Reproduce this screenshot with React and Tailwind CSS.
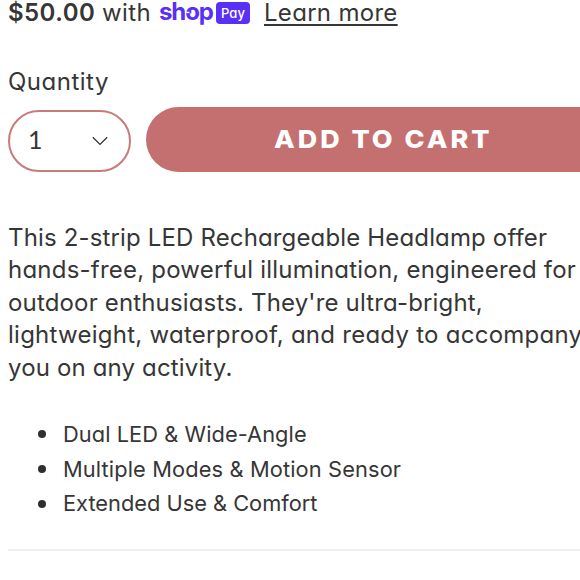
const descriptionLines = [
  { text: 'This 2-strip LED Rechargeable Headlamp offer', tracking: 'tracking-[0.15px]' },
  { text: 'hands-free, powerful illumination, engineered for', tracking: 'tracking-[0.22px]' },
  { text: "outdoor enthusiasts. They're ultra-bright,", tracking: 'tracking-[0.16px]' },
  { text: 'lightweight, waterproof, and ready to accompany', tracking: 'tracking-[0.26px]' },
  { text: 'you on any activity.', tracking: 'tracking-[0.15px]' },
];

const features = [
  { text: 'Dual LED & Wide-Angle', tracking: 'tracking-[0.07px]' },
  { text: 'Multiple Modes & Motion Sensor', tracking: 'tracking-[0.13px]' },
  { text: 'Extended Use & Comfort', tracking: 'tracking-[0px]' },
];

const ShopPayLogo = () => (
  <span className="ml-[8px] flex h-[26px] text-[#5a31f4]">
    <span className="relative -mt-[1px] w-[57px] whitespace-nowrap text-[24px] leading-[26px] font-bold tracking-[-1.1px]">
      shop
      {/* notch in the o */}
      <svg className="absolute top-[8px] left-[26px]" width="13" height="12" viewBox="0 0 13 12" fill="none">
        <path d="M.4 5.4h4" stroke="#fff" strokeWidth="1.4" />
        <path d="M5.6 3.2v3.2" stroke="#5a31f4" strokeWidth="1.4" />
      </svg>
    </span>
    <span className="mt-[2px] h-[22px] w-[34px] rounded-[4px] bg-[#5a31f4] text-center text-[13px] leading-[22px] font-medium text-white">
      Pay
    </span>
  </span>
);

const QuantitySelect = () => (
  <button className="flex h-[62px] w-[123px] shrink-0 items-center justify-between rounded-full border-2 border-[#c87b7b] pr-[21px] pl-[18px]">
    <span className="pb-[3px] font-['Lato',sans-serif] text-[25px] leading-none font-normal">1</span>
    <svg width="16" height="10" viewBox="0 0 16 10" fill="none" stroke="#333" strokeWidth="1.3">
      <path d="M.8 1.2 8 8.4l7.2-7.2" />
    </svg>
  </button>
);

const App = () => {
  return (
    <div className="h-[580px] w-[580px] overflow-hidden bg-white pl-[8px] font-['Inter',sans-serif] font-normal text-[#363636] [font-feature-settings:'cv11']">
      <div className="flex h-[26px] items-center text-[24px] leading-[26px]">
        <span className="w-[87px] font-semibold tracking-[0.45px]">$50.00</span>
        <span className="ml-[7px] w-[49px] tracking-[0.4px]">with</span>
        <ShopPayLogo />
        <a href="#" className="ml-[14px] tracking-[0.3px] underline decoration-[1.5px] underline-offset-[3px]">Learn more</a>
      </div>

      <div className="mt-[40px] h-[32px] text-[24px] leading-[32px]">
        <span className="tracking-[0.5px]">Quantity</span>
      </div>

      <div className="mt-[9px] flex h-[65px] items-center">
        <div className="pt-[3px]"><QuantitySelect /></div>
        <button className="ml-[15px] h-[65px] w-[474px] shrink-0 rounded-full bg-[#c57070] text-[24.5px] leading-[62px] font-extrabold text-white">
          <span className="inline-block -translate-y-px scale-x-110 tracking-[2.7px]">ADD TO CART</span>
        </button>
      </div>

      <p className="mt-[50px] text-[24px] leading-[32.4px] whitespace-nowrap">
        {descriptionLines.map((line) => (
          <span key={line.text} className="block">
            <span className={line.tracking}>{line.text}</span>
          </span>
        ))}
      </p>

      <ul className="mt-[33px] text-[21.8px] leading-[34.6px]">
        {features.map((item) => (
          <li key={item.text} className="flex items-center">
            <span className="mr-[17px] ml-[30px] h-[8px] w-[8px] rounded-full bg-[#2f2f2f]" />
            <span className={item.tracking}>{item.text}</span>
          </li>
        ))}
      </ul>

      <hr className="mt-[28px] border-t-2 border-[#f0f0f0]" />
    </div>
  );
};

export default App;
